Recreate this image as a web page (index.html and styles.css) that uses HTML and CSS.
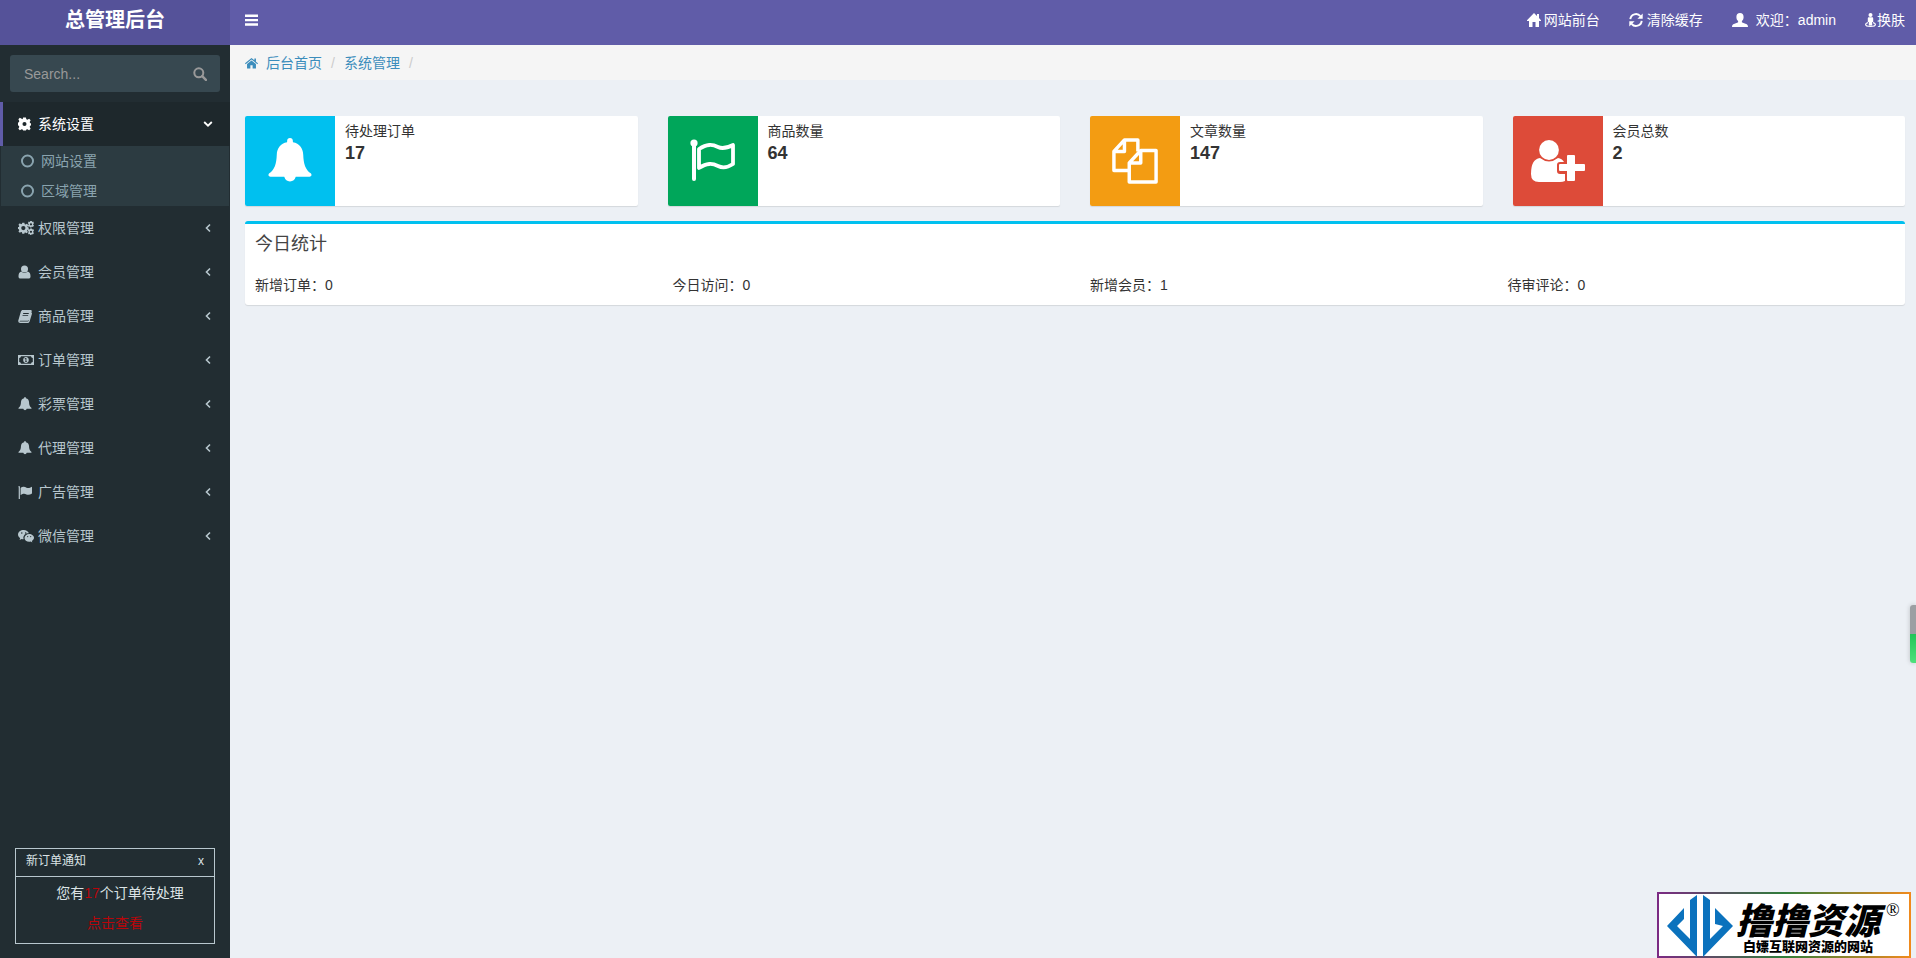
FILE: index.html
```html
<!DOCTYPE html>
<html lang="zh-CN">
<head>
<meta charset="utf-8">
<title>总管理后台</title>
<link rel="stylesheet" href="styles.css">
</head>
<body>
<svg class="sprite" aria-hidden="true">
  <symbol id="i-bell" viewBox="0 0 16 16"><path d="M8 0c.6 0 1 .4 1 1v.5c2.300.4 3.500 2.100 3.600 4.300.1 3.200.8 5.200 2.600 6.500.5.400.3 1.200-.4 1.200H10A2.100 2.300 0 0 1 6 13.500H1.200c-.7 0-.9-.8-.4-1.200 1.800-1.300 2.500-3.300 2.600-6.500C3.500 3.600 4.700 1.900 7 1.500V1c0-.6.4-1 1-1z"/></symbol>
  <symbol id="i-gear" viewBox="1 1 14 14"><path fill-rule="evenodd" d="M6.500 1h3l.5 2 1.100.5L13 2.400 14.600 4l-1 1.900.4 1.100 1 .5v2l-1 .5-.4 1.100 1 1.900-1.600 1.600-1.900-1-1.100.4-.5 1h-3l-.5-1-1.100-.4-1.900 1L1.400 13l1-1.900L2 10l-1-.5v-3L2 6l.4-1.100-1-1.900L3 1.400l1.900 1L6 3zM8 5.800a2.200 2.200 0 1 0 0 4.400 2.200 2.200 0 0 0 0-4.400z"/></symbol>
  <symbol id="i-gears" viewBox="0 0 30 26"><path fill-rule="evenodd" d="M8 3h4l.6 2.800 1.600.7 2.400-1.600 2.600 2.700-1.600 2.400.7 1.600 1.700.4v3.800l-2.200.6-.7 1.600 1.600 2.400-2.600 2.600-2.400-1.600-1.600.7L12 24H8l-.6-2.800-1.600-.7-2.400 1.600L.8 19.500l1.600-2.400-.7-1.600L0 15.100v-3.800l1.700-.4.7-1.600L.8 6.900l2.600-2.600 2.400 1.600 1.600-.7zM10 9.200a4 4 0 1 0 0 8 4 4 0 0 0 0-8zM23 0h3l.5 1.800L28.500 1 30 4l-1.500 1.500v1.500L30 8.500l-2 2.500-2-.8L25 12h-2l-.8-1.800-2 .8L18.500 8.500 20 7V5.500L18.500 4l1.500-3 2 .8zm1.300 4a2.100 2.100 0 1 0 0 4.200 2.100 2.100 0 0 0 0-4.200zM23 14h3l.5 1.800 2-.8 1.500 3-1.500 1.500V21l1.500 1.500-2 2.500-2-.8L25 26h-2l-.8-1.800-2 .8-1.700-2.500L20 21v-1.500L18.500 18l1.500-3 2 .8zm1.300 4a2.100 2.100 0 1 0 0 4.200 2.100 2.100 0 0 0 0-4.200z"/></symbol>
  <symbol id="i-user" viewBox="0 0 12 14"><circle cx="6" cy="4" r="3.500"/><path d="M2.800 6.600A4.500 4.500 0 0 0 9.200 6.600C11.400 7 12 9.500 12 11.500c0 1.400-.8 2.100-2 2.100H2c-1.200 0-2-.7-2-2.100 0-2 .6-4.500 2.800-4.900z"/></symbol>
  <symbol id="i-book" viewBox="0 0 14 14"><path fill-rule="evenodd" d="M4.800 1h7.700c1 0 1.500.7 1.200 1.600l-2.500 8c-.3.900-.9 1.200-1.800 1.200H2.300c-.8 0-1 .8-.1.800h7.500c.6 0 .9-.3 1.100-.8l2.600-8.300c.6.300.7.800.5 1.400l-2.300 7.600c-.3.900-1 1.500-1.900 1.500H2.300C.8 14 0 12.800.3 11.500L2.900 2.600C3.300 1.500 3.900 1 4.800 1zM5.300 4l-.3.900h5.600l.3-.9zM4.700 6.200l-.3.900H10l.3-.9z"/></symbol>
  <symbol id="i-money" viewBox="0 0 16 12"><path fill-rule="evenodd" d="M0 1h16v10H0zM3 2.200A2 2 0 0 1 1.200 4v4A2 2 0 0 1 3 9.800h10A2 2 0 0 1 14.800 8V4A2 2 0 0 1 13 2.200zM8 3c1.800 0 2.800 1.400 2.800 3S9.800 9 8 9 5.200 7.600 5.200 6 6.200 3 8 3zM7.500 4l-1 .8.4.500.6-.3V7H7v.8h2V7h-.6V4z"/></symbol>
  <symbol id="i-flag" viewBox="0 0 14 14"><path d="M1 1a1 1 0 0 1 .9 1.500V14H.7V2.500A1 1 0 0 1 1 1zM2.600 2.900C5.500 1 7 2 8.500 2.700c1.800.8 3.300.3 5.500-.9v6.700c-2.100 1.300-3.700 1.700-5.600.9-1.700-.8-3.200-1-5.800.7z"/></symbol>
  <symbol id="i-wechat" viewBox="0 0 16 14"><path fill-rule="evenodd" d="M5.700 1C2.600 1 0 3 0 5.600c0 1.500.8 2.700 2.100 3.600l-.5 1.700 2-1c.7.200 1.300.3 2 .3A4.500 4.500 0 0 1 10.900 4.300C10.300 2.300 8.200 1 5.700 1zM3.800 3.200a.7.700 0 1 1 0 1.500.7.700 0 0 1 0-1.500zm3.900 0a.7.700 0 1 1 0 1.500.7.700 0 0 1 0-1.500zM11.200 5C8.500 5 6.500 6.800 6.500 8.900c0 2.200 2.100 3.900 4.700 3.900.5 0 1.100-.1 1.600-.3l1.500.9-.4-1.400c1.200-.8 2.100-1.900 2.100-3.200C16 6.800 13.800 5 11.200 5zM9.700 7a.6.600 0 1 1 0 1.200.6.600 0 0 1 0-1.200zm3 0a.6.600 0 1 1 0 1.200.6.600 0 0 1 0-1.200z"/></symbol>
  <symbol id="i-left" viewBox="0 0 6 10"><path d="M5 1.500 1.500 5 5 8.500" fill="none" stroke="currentColor" stroke-width="1.600"/></symbol>
  <symbol id="i-down" viewBox="0 0 10 6"><path d="M1.200 1 5 4.700 8.800 1" fill="none" stroke="currentColor" stroke-width="1.800"/></symbol>
  <symbol id="i-ring" viewBox="0 0 12 12"><circle cx="6" cy="6" r="5.100" fill="none" stroke="currentColor" stroke-width="1.800"/></symbol>
  <symbol id="i-search" viewBox="0 0 14 14"><circle cx="5.800" cy="5.800" r="4.500" fill="none" stroke="currentColor" stroke-width="2"/><path d="m9.200 9.200 3.700 3.700" stroke="currentColor" stroke-width="2.400" stroke-linecap="round"/></symbol>
  <symbol id="i-bars" viewBox="0 0 12 12"><path d="M0 1h12v2.200H0zM0 5h12v2.200H0zM0 9h12v2.200H0z"/></symbol>
  <symbol id="i-home" viewBox="0 0 14 14"><path d="M7 0l3 3V1h2v4l2 2.200V8h-2v6H8.500V9h-3v5H2V8H0v-.8z"/></symbol>
  <symbol id="i-home2" viewBox="0 0 14 12"><path d="M7 .5 0 6.400l.7.900L7 2.100l6.300 5.200.7-.9-2.200-1.800V1.200h-1.700v1.900zM7 3.200 2.200 7.200V11.800h3.600V8.300h2.400v3.500h3.600V7.200z"/></symbol>
  <symbol id="i-refresh" viewBox="0 0 14 14"><g fill="none" stroke="currentColor" stroke-width="1.900"><path d="M1.300 6.200A5.700 5.700 0 0 1 11.400 3.200M12.700 7.800A5.700 5.700 0 0 1 2.600 10.800"/></g><path d="M13.700.5v5.300H8.400zM.3 13.500V8.200h5.300z"/></symbol>
  <symbol id="i-person" viewBox="0 0 16 14"><path d="M8 0c2.300 0 3.600 1.600 3.600 3.900 0 1.900-.6 3.200-1.700 4.100v1.200c1 .8 3.300 1.200 4.800 2 .9.500 1.200 1.100 1.300 2.800H0c.1-1.700.4-2.300 1.300-2.800 1.500-.8 3.800-1.200 4.800-2V8C5 7.100 4.400 5.800 4.400 3.900 4.400 1.600 5.700 0 8 0z"/></symbol>
  <symbol id="i-street" viewBox="0 0 11 14"><circle cx="5.500" cy="2" r="2"/><path d="M3.700 4.300h3.600c.6 0 .9.400.9 1V9h-1v3.400H3.800V9h-1V5.300c0-.6.3-1 .9-1z"/><path d="M3 9.700C1.600 10 .6 10.600.6 11.400c0 1.200 2.200 1.900 4.900 1.900s4.900-.7 4.900-1.900c0-.8-1-1.400-2.400-1.700" fill="none" stroke="currentColor" stroke-width="1.200"/></symbol>
  <symbol id="i-flag-o" viewBox="0 0 46 46"><g fill="none" stroke="currentColor" stroke-width="4" stroke-linecap="round" stroke-linejoin="round"><path d="M4 5v36"/><path stroke-width="3.800" d="M9 11c8-5 13-5 19-2 4 2 9 1 15-2v19c-6 4-11 4-15 2-6-3-11-3-19 2z"/></g><circle cx="4" cy="5" r="3.600"/></symbol>
  <symbol id="i-copy" viewBox="0 0 48 48"><g fill="none" stroke="currentColor" stroke-width="3.600" stroke-linejoin="round"><path d="M18 34H2V14L13 2h14v12M13 2v12H2"/><path d="M18 26 30 13h16v33H18zM30 13v13H18"/></g></symbol>
  <symbol id="i-user-plus" viewBox="0 0 54 42"><circle cx="18" cy="10" r="9.900"/><path d="M9 18q9 7 18 0 4 .5 6 4h-4q-3 0-3 3v6q0 3 3 3h5v7q-2 1-5 1H8q-8 0-8-8 0-15 9-16z"/><path d="M37 15h6q1 0 1 1v8h9q1 0 1 1v5q0 1-1 1h-9v9q0 1-1 1h-6q-1 0-1-1v-9h-7q-1 0-1-1v-5q0-1 1-1h7v-8q0-1 1-1z"/></symbol>
</svg>

<header class="topbar">
  <a class="brand" href="#">总管理后台</a>
  <nav class="topnav">
    <button class="toggle" type="button" aria-label="切换菜单"><svg class="ic12"><use href="#i-bars"/></svg></button>
    <div class="toplinks">
      <a class="tight" href="#"><svg class="ic14"><use href="#i-home"/></svg>网站前台</a>
      <a class="mid" href="#"><svg class="ic14"><use href="#i-refresh"/></svg>清除缓存</a>
      <a class="wide" href="#"><svg class="ic16"><use href="#i-person"/></svg>欢迎：admin</a>
      <a href="#"><svg class="ic11"><use href="#i-street"/></svg>换肤</a>
    </div>
  </nav>
</header>

<div class="layout">
  <aside class="sidebar">
    <form class="search">
      <input type="text" placeholder="Search..." aria-label="Search">
      <button type="button" aria-label="搜索"><svg class="ic14"><use href="#i-search"/></svg></button>
    </form>
    <ul class="menu">
      <li class="active"><a href="#"><i><svg class="ic12"><use href="#i-gear"/></svg></i><span>系统设置</span><svg class="down"><use href="#i-down"/></svg></a>
        <ul class="submenu">
          <li><a href="#"><svg class="ic12"><use href="#i-ring"/></svg>网站设置</a></li>
          <li><a href="#"><svg class="ic12"><use href="#i-ring"/></svg>区域管理</a></li>
        </ul>
      </li>
      <li><a href="#"><i><svg class="ic16"><use href="#i-gears"/></svg></i><span>权限管理</span><svg class="left"><use href="#i-left"/></svg></a></li>
      <li><a href="#"><i><svg class="ic12"><use href="#i-user"/></svg></i><span>会员管理</span><svg class="left"><use href="#i-left"/></svg></a></li>
      <li><a href="#"><i><svg class="ic14"><use href="#i-book"/></svg></i><span>商品管理</span><svg class="left"><use href="#i-left"/></svg></a></li>
      <li><a href="#"><i><svg class="ic16"><use href="#i-money"/></svg></i><span>订单管理</span><svg class="left"><use href="#i-left"/></svg></a></li>
      <li><a href="#"><i><svg class="ic14"><use href="#i-bell"/></svg></i><span>彩票管理</span><svg class="left"><use href="#i-left"/></svg></a></li>
      <li><a href="#"><i><svg class="ic14"><use href="#i-bell"/></svg></i><span>代理管理</span><svg class="left"><use href="#i-left"/></svg></a></li>
      <li><a href="#"><i><svg class="ic14"><use href="#i-flag"/></svg></i><span>广告管理</span><svg class="left"><use href="#i-left"/></svg></a></li>
      <li><a href="#"><i><svg class="ic16"><use href="#i-wechat"/></svg></i><span>微信管理</span><svg class="left"><use href="#i-left"/></svg></a></li>
    </ul>
    <section class="notice">
      <div class="notice-head"><h2>新订单通知</h2><button type="button" aria-label="关闭">x</button></div>
      <div class="notice-body">
        <p>您有<em>17</em>个订单待处理</p>
        <a href="#">点击查看</a>
      </div>
    </section>
  </aside>

  <main class="content">
    <nav class="crumbs">
      <svg class="ic13"><use href="#i-home2"/></svg>
      <a href="#">后台首页</a><i>/</i><a href="#">系统管理</a><i>/</i>
    </nav>
    <div class="cards">
      <article class="card"><div class="tile cyan"><svg class="ic46"><use href="#i-bell"/></svg></div><div class="info"><span>待处理订单</span><strong>17</strong></div></article>
      <article class="card"><div class="tile green"><svg class="ic46"><use href="#i-flag-o"/></svg></div><div class="info"><span>商品数量</span><strong>64</strong></div></article>
      <article class="card"><div class="tile orange"><svg class="ic46"><use href="#i-copy"/></svg></div><div class="info"><span>文章数量</span><strong>147</strong></div></article>
      <article class="card"><div class="tile red"><svg class="ic54"><use href="#i-user-plus"/></svg></div><div class="info"><span>会员总数</span><strong>2</strong></div></article>
    </div>
    <section class="box">
      <h1>今日统计</h1>
      <div class="stats"><span>新增订单：0</span><span>今日访问：0</span><span>新增会员：1</span><span>待审评论：0</span></div>
    </section>
  </main>
</div>

<div class="gauge"></div>
<div class="mark">
  <svg class="mark-logo" viewBox="0 0 66 62"><path fill="#0b72bd" d="M30 0v62L0 31 17 13v11l-7 7 13 13V5zM36 0l7 5v39l13-13-8-2V13l18 18-30 31z"/></svg>
  <div class="mark-text"><b>撸撸资源</b><small>白嫖互联网资源的网站</small></div>
  <span class="reg">®</span>
</div>
</body>
</html>
```
FILE: styles.css
```css
* { box-sizing: border-box; }
body {
  margin: 0;
  min-height: 100vh;
  display: flex;
  flex-direction: column;
  background: #ecf0f5;
  color: #333;
  font: 14px/20px "Liberation Sans", "Noto Sans CJK SC", sans-serif;
}
a { color: inherit; text-decoration: none; }
button { border: 0; padding: 0; background: none; color: inherit; font: inherit; cursor: pointer; }
ul { list-style: none; margin: 0; padding: 0; }
svg { fill: currentColor; flex: none; }
.sprite { position: absolute; width: 0; height: 0; }
.ic11 { width: 11px; height: 14px; }
.ic12 { width: 13px; height: 14px; }
.ic13 { width: 13px; height: 14px; }
.ic14 { width: 14px; height: 14px; }
.ic16 { width: 16px; height: 14px; }
.ic46 { width: 46px; height: 46px; }
.ic54 { width: 54px; height: 42px; }

.topbar { display: flex; height: 45px; color: #fff; line-height: 40px; }
.brand { width: 230px; background: #555299; text-align: center; font-size: 20px; font-weight: bold; }
.topnav { flex: 1; display: flex; justify-content: space-between; background: #605ca8; padding: 0 11px 5px 15px; }
.toggle { display: flex; align-items: center; }
.toplinks { display: flex; gap: 29px; }
.toplinks a { display: flex; align-items: center; gap: 1px; }
.toplinks .tight { gap: 3px; }
.toplinks .mid { gap: 4px; }
.toplinks .wide { gap: 8px; }

.layout { flex: 1; display: flex; }
.sidebar { width: 230px; display: flex; flex-direction: column; background: #222d32; color: #b8c7ce; }
.search { display: flex; margin: 10px; height: 37px; background: #374850; border-radius: 3px; color: #999; }
.search input { flex: 1; min-width: 0; border: 0; background: none; padding: 0 14px; color: #999; font: inherit; outline: 0; }
.search input::placeholder { color: #999; opacity: 1; }
.search button { width: 41px; display: flex; align-items: center; justify-content: center; }
.menu > li > a { display: flex; align-items: center; height: 44px; padding: 0 19px 0 15px; border-left: 3px solid transparent; }
.menu i { display: flex; width: 20px; }
.menu span { flex: 1; }
.menu > .active > a { padding-right: 17px; background: #1e282c; border-left-color: #605ca8; color: #fff; }
.left { width: 6px; height: 10px; }
.down { width: 10px; height: 6px; }
.submenu { margin: 0 1px; background: #2c3b41; color: #8aa4af; }
.submenu a { display: flex; align-items: center; gap: 7px; height: 30px; padding-left: 20px; }

.notice { margin: auto 15px 14px; border: 1px solid #b8c7ce; color: #dbe3e6; }
.notice-head { display: flex; justify-content: space-between; height: 28px; padding: 0 10px; border-bottom: 1px solid #b8c7ce; font-size: 12px; line-height: 24px; }
.notice-head h2 { margin: 0; font-size: 12px; font-weight: normal; }
.notice-head button { height: 24px; }
.notice-body { display: flex; flex-direction: column; align-items: center; gap: 10px; padding: 6px 0 10px; }
.notice-body p { margin: 0; padding-left: 10px; }
.notice-body em, .notice-body a { font-style: normal; color: #b8060a; }

.content { flex: 1; min-width: 0; }
.crumbs { display: flex; align-items: center; height: 35px; padding: 0 15px; background: #f5f5f5; color: #3c8dbc; }
.crumbs svg { margin-right: 8px; }
.crumbs i { color: #ccc; font-style: normal; padding: 0 9px; }
.cards { display: grid; grid-template-columns: repeat(4, 1fr); gap: 30px; padding: 36px 11px 15px 15px; }
.card { display: flex; height: 90px; background: #fff; border-radius: 2px; box-shadow: 0 1px 1px rgba(0, 0, 0, .1); }
.tile { width: 90px; display: flex; align-items: center; justify-content: center; color: #fff; border-radius: 2px 0 0 2px; }
.cyan { background: #00c0ef; }
.green { background: #00a65a; }
.orange { background: #f39c12; }
.red { background: #dd4b39; }
.info { display: flex; flex-direction: column; padding: 5px 10px; }
.info strong { font-size: 18px; line-height: 24px; }
.box { margin: 0 11px 0 15px; padding: 10px; background: #fff; border-top: 3px solid #00c0ef; border-radius: 3px; box-shadow: 0 1px 1px rgba(0, 0, 0, .1); }
.box h1 { margin: 0 0 21px; font-size: 18px; line-height: 20px; font-weight: normal; color: #444; }
.stats { display: grid; grid-template-columns: repeat(4, 1fr); gap: 30px; }

.gauge { position: fixed; right: 0; top: 605px; width: 6px; height: 58px; background: linear-gradient(#9b9fa3 29px, #22c558 29px, #4fe07c); border-radius: 3px 0 0 3px; box-shadow: 0 0 5px rgba(0, 0, 0, .2); }
.mark { position: fixed; right: 5px; bottom: 0; display: flex; width: 254px; height: 66px; padding: 1px 8px; border: 2px solid; border-image: linear-gradient(90deg, #7b2a83, #2f7d3a 50%, #f08a1d) 1; background: #fff; color: #000; }
.mark-logo { width: 66px; height: 62px; }
.mark-text { display: flex; flex-direction: column; align-items: center; padding: 2px 0 0 3px; font-family: "Noto Sans CJK SC", sans-serif; font-weight: 900; }
.mark-text b { font-size: 36px; line-height: 42px; font-style: italic; font-weight: 900; }
.mark-text small { font-size: 13px; line-height: 14px; }
.reg { font: 18px/20px "Liberation Serif", serif; padding: 5px 0 0 6px; }
```
